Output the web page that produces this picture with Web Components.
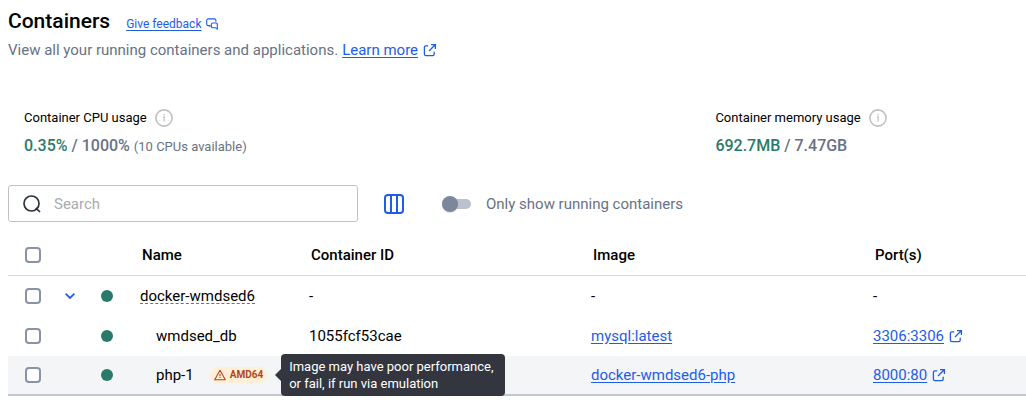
<!DOCTYPE html>
<html lang="en">
<head>
<meta charset="utf-8">
<title>Containers</title>
<style>
  body {
    margin: 0;
    background: #fff;
    color: #000;
    font-family: Roboto, "Liberation Sans", sans-serif;
    font-size: 15px;
    line-height: 20px;
    --blue: #1d5de8;
    --green: #2a7a6b;
    --muted: #677285;
    --outline: #8993a5;
  }
</style>
</head>
<body>
<containers-page></containers-page>

<script>
const ICONS = {
  external: `<svg width="14" height="14" viewBox="0 0 14 14" fill="none" stroke="currentColor" stroke-width="1.3">
      <path d="M5.2 2.8H3a1.6 1.6 0 0 0-1.6 1.6v6.6A1.6 1.6 0 0 0 3 12.6h6.6a1.6 1.6 0 0 0 1.6-1.6V8.8M8 1.6h4.4V6M12.2 1.8L6 8"/></svg>`,
  feedback: `<svg width="12" height="12" viewBox="0 0 12 12" fill="none" stroke="currentColor" stroke-width="1.1" stroke-linejoin="round">
      <path d="M4 9V7.6H2.2A1.5 1.5 0 0 1 .7 6.1V2.4A1.5 1.5 0 0 1 2.2.9h6.2a1.5 1.5 0 0 1 1.5 1.5v1.4"/>
      <path d="M6.6 5h3.4a1.3 1.3 0 0 1 1.3 1.3v4.9L9.6 9.8h-3A1.2 1.2 0 0 1 5.4 8.6V6.2A1.2 1.2 0 0 1 6.6 5z"/></svg>`,
  info: `<svg width="18" height="18" viewBox="0 0 18 18" fill="none" stroke="#c0c0c2" stroke-width="1.6">
      <circle cx="9" cy="9" r="8.1"/><path d="M8 7.8h1.2v4.8" stroke-width="1.2"/><circle cx="9.1" cy="5.6" r=".8" fill="#c0c0c2" stroke="none"/></svg>`,
  search: `<svg width="18" height="18" viewBox="0 0 18 18" fill="none" stroke="#2c333f" stroke-width="1.7">
      <circle cx="8.5" cy="8.5" r="7.5"/><path d="M12.8 12.8l4.2 4.2"/></svg>`,
  columns: `<svg width="20" height="20" viewBox="0 0 20 20" fill="none" stroke="currentColor" stroke-width="2">
      <rect x="1" y="1" width="18" height="18" rx="3"/><path d="M7 1v18M13 1v18"/></svg>`,
  chevron: `<svg width="10" height="6" viewBox="0 0 10 6" fill="none" stroke="currentColor" stroke-width="1.8">
      <path d="M.6 .7L5 5 9.4 .7"/></svg>`,
  warning: `<svg width="12" height="12" viewBox="0 0 12 12" fill="none" stroke="currentColor" stroke-width="1.1" stroke-linejoin="round">
      <path d="M6 1.3L11.3 10.7H.7z"/><path d="M6 4.8v2.4M6 8v.9"/></svg>`
};

class BaseElement extends HTMLElement {
    constructor() {
        super();
        this.attachShadow({mode: 'open'});
    }

    render(styles, html) {
        this.shadowRoot.innerHTML = `<style>* { box-sizing: border-box; } svg { display: block; flex: none; } ${styles}</style>${html}`;
    }
}

/* a link with an optional icon after it */
class IconLink extends BaseElement {
    connectedCallback() {
        const icon = ICONS[this.getAttribute('icon')] || '';
        this.render(`
          :host { display: flex; align-items: center; gap: 5px; color: var(--blue); }
          a { color: inherit; text-decoration: underline; text-underline-offset: 2px; }
        `, `<a href="#"><slot></slot></a>${icon}`);
    }
}

class PageHeader extends BaseElement {
    connectedCallback() {
        this.render(`
          :host { display: block; padding: 8px 8px 0; }
          .title { display: flex; align-items: center; gap: 16px; height: 26px; }
          h1 { margin: 0; font-size: 21px; line-height: 26px; font-weight: 500; }
          .title icon-link { font-size: 12px; padding-top: 6px; }
          p { margin: 6px 0 0; display: flex; gap: 4px; color: var(--muted); }
        `, `
          <div class="title">
            <h1>Containers</h1>
            <icon-link icon="feedback">Give feedback</icon-link>
          </div>
          <p><span>View all your running containers and applications.</span>
            <icon-link icon="external">Learn more</icon-link></p>
        `);
    }
}

class UsageStat extends BaseElement {
    connectedCallback() {
        this.render(`
          :host { display: block; }
          .label { display: flex; align-items: center; gap: 8px; font-size: 13px; }
          .value { margin-top: 8px; font-size: 16px; font-weight: 500; color: var(--muted); }
          b { font-weight: 500; color: var(--green); }
          ::slotted(small) { font-size: 13px; font-weight: 400; }
        `, `
          <div class="label"><span>${this.getAttribute('label')}</span>${ICONS.info}</div>
          <div class="value"><b>${this.getAttribute('used')}</b> / ${this.getAttribute('total')} <slot></slot></div>
        `);
    }
}

class SearchBox extends BaseElement {
    connectedCallback() {
        this.render(`
          :host { display: block; }
          label { display: flex; align-items: center; gap: 13px; height: 37px; padding: 0 14px;
            border: 1px solid #c1c2c5; border-radius: 3px; }
          input { flex: 1; min-width: 0; border: 0; padding: 0; outline: 0; background: none; font: inherit; }
          input::placeholder { color: #a9abae; opacity: 1; }
        `, `<label>${ICONS.search}<input type="text" placeholder="Search" aria-label="Search"></label>`);
    }
}

class ToggleSwitch extends BaseElement {
    connectedCallback() {
        this.render(`
          :host { display: block; color: var(--muted); }
          label { display: flex; align-items: center; gap: 15px; }
          input { appearance: none; display: flex; align-items: center; margin: 0; width: 29px; height: 10px;
            border-radius: 5px; background: #bcc1cd; }
          input::before { content: ""; width: 16px; height: 16px; flex: none; border-radius: 50%;
            background: #7d879b; box-shadow: 0 1px 1px #0002; }
          input:checked { justify-content: flex-end; }
        `, `<label><input type="checkbox" role="switch"><span><slot></slot></span></label>`);
    }
}

class TableToolbar extends BaseElement {
    connectedCallback() {
        this.render(`
          :host { display: flex; align-items: center; padding: 0 8px; }
          search-box { width: 350px; }
          button { margin: 0 38px 0 26px; padding: 0; border: 0; background: none; color: var(--blue); }
        `, `
          <search-box></search-box>
          <button type="button" aria-label="Choose columns">${ICONS.columns}</button>
          <toggle-switch>Only show running containers</toggle-switch>
        `);
    }
}

class PlatformBadge extends BaseElement {
    connectedCallback() {
        this.render(`
          :host { position: relative; display: inline-block; }
          .badge { display: flex; align-items: center; gap: 4px; height: 16px; padding: 0 4px; border-radius: 8px;
            background: #ffefd6; color: #b1461c; font-size: 10px; font-weight: 700; }
          .tip { position: absolute; left: calc(100% + 14px); top: 50%; transform: translateY(-50%);
            width: 224px; padding: 4px 8px; border-radius: 4px; background: #33363f; color: #fff;
            font-size: 13px; line-height: 17px; white-space: nowrap; }
          .tip::before { content: ""; position: absolute; right: 100%; top: 50%; margin-top: -6px;
            border: 6px solid transparent; border-left: 0; border-right-color: #33363f; }
        `, `
          <span class="badge">${ICONS.warning}<slot></slot></span>
          <span class="tip" role="tooltip">Image may have poor performance,<br>or fail, if run via emulation</span>
        `);
    }
}

class ContainersTable extends BaseElement {
    constructor() {
        super();
        this.rows = [
            {name: 'docker-wmdsed6', group: true},
            {name: 'wmdsed_db', id: '1055fcf53cae', image: 'mysql:latest', port: '3306:3306'},
            {name: 'php-1', badge: 'AMD64', image: 'docker-wmdsed6-php', port: '8000:80', hover: true}
        ];
    }

    rowHtml(row) {
        const name = row.group
            ? `<span class="group">${row.name}</span>`
            : `<div class="child"><span>${row.name}</span>${row.badge ? `<platform-badge>${row.badge}</platform-badge>` : ''}</div>`;
        const empty = row.group ? '-' : '';
        return `
          <tr class="${row.hover ? 'hover' : ''}">
            <td><input type="checkbox" aria-label="Select ${row.name}"></td>
            <td>${row.group ? `<button type="button" aria-label="Collapse">${ICONS.chevron}</button>` : ''}</td>
            <td><i class="dot"></i></td>
            <td>${name}</td>
            <td>${row.id || empty}</td>
            <td>${row.image ? `<icon-link>${row.image}</icon-link>` : empty}</td>
            <td>${row.port ? `<icon-link icon="external">${row.port}</icon-link>` : empty}</td>
          </tr>`;
    }

    connectedCallback() {
        this.render(`
          :host { display: block; padding-left: 8px; }
          table { width: 100%; table-layout: fixed; border-collapse: separate; border-spacing: 0; }
          th, td { padding: 0; height: 40px; text-align: left; vertical-align: middle; white-space: nowrap; }
          th { height: 41px; padding-left: 2px; font-weight: 500; border-bottom: 1px solid #d9dadd; }
          th:first-child, td:first-child { padding-left: 17px; }
          .check { width: 54px; }
          .expand { width: 39px; }
          .status { width: 39px; }
          .name { width: 169px; }
          .wide { width: 27.7%; }
          input { appearance: none; display: block; width: 16px; height: 16px; margin: 0;
            border: 2px solid var(--outline); border-radius: 4px; background: #fff; }
          button { display: block; padding: 4px 3px; border: 0; background: none; color: var(--blue); }
          .dot { display: block; width: 12px; height: 12px; border-radius: 50%; background: var(--green); }
          .group { border-bottom: 1px dashed #677285; line-height: 14px; display: inline-block; }
          .child { display: flex; align-items: center; gap: 16px; padding-left: 16px; }
          .hover td { background: #f4f5f7; border-bottom: 2px solid #c3c7d1; }
        `, `
          <table>
            <colgroup><col class="check"><col class="expand"><col class="status"><col class="name"><col class="wide"><col class="wide"><col></colgroup>
            <thead>
              <tr><th><input type="checkbox" aria-label="Select all"></th><th></th><th></th>
                <th>Name</th><th>Container ID</th><th>Image</th><th>Port(s)</th></tr>
            </thead>
            <tbody>${this.rows.map(row => this.rowHtml(row)).join('')}</tbody>
          </table>
        `);
    }
}

class ContainersPage extends BaseElement {
    connectedCallback() {
        this.render(`
          :host { display: block; }
          .stats { display: grid; grid-template-columns: 69fr 31fr; margin: 48px 0 28px; padding-left: 24px; }
          containers-table { margin-top: 13px; }
        `, `
          <page-header></page-header>
          <div class="stats">
            <usage-stat label="Container CPU usage" used="0.35%" total="1000%"><small>(10 CPUs available)</small></usage-stat>
            <usage-stat label="Container memory usage" used="692.7MB" total="7.47GB"></usage-stat>
          </div>
          <table-toolbar></table-toolbar>
          <containers-table></containers-table>
        `);
    }
}

customElements.define('icon-link', IconLink);
customElements.define('page-header', PageHeader);
customElements.define('usage-stat', UsageStat);
customElements.define('search-box', SearchBox);
customElements.define('toggle-switch', ToggleSwitch);
customElements.define('table-toolbar', TableToolbar);
customElements.define('platform-badge', PlatformBadge);
customElements.define('containers-table', ContainersTable);
customElements.define('containers-page', ContainersPage);
</script>
</body>
</html>
